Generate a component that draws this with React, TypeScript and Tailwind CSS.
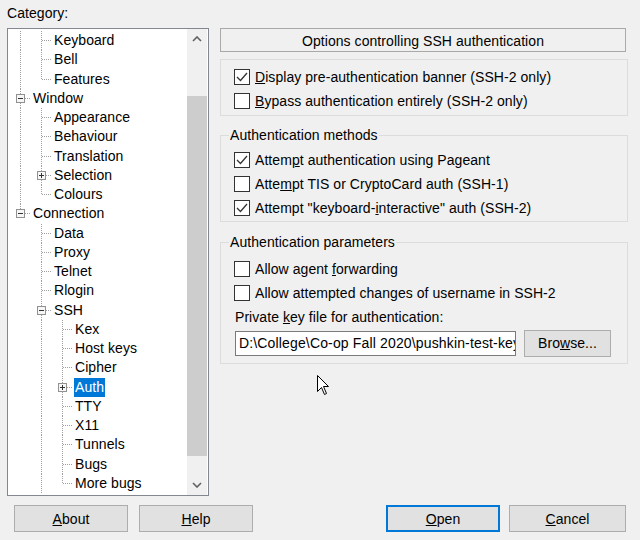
import React from "react";

type Row = {
  label: string;
  level: number;
  guides: boolean[];
  last: boolean;
  expander?: "+" | "-";
  selected?: boolean;
};

const rows: Row[] = [
  { label: "Keyboard", level: 2, guides: [true], last: false },
  { label: "Bell", level: 2, guides: [true], last: false },
  { label: "Features", level: 2, guides: [true], last: true },
  { label: "Window", level: 1, guides: [], last: false, expander: "-" },
  { label: "Appearance", level: 2, guides: [true], last: false },
  { label: "Behaviour", level: 2, guides: [true], last: false },
  { label: "Translation", level: 2, guides: [true], last: false },
  { label: "Selection", level: 2, guides: [true], last: false, expander: "+" },
  { label: "Colours", level: 2, guides: [true], last: true },
  { label: "Connection", level: 1, guides: [], last: true, expander: "-" },
  { label: "Data", level: 2, guides: [false], last: false },
  { label: "Proxy", level: 2, guides: [false], last: false },
  { label: "Telnet", level: 2, guides: [false], last: false },
  { label: "Rlogin", level: 2, guides: [false], last: false },
  { label: "SSH", level: 2, guides: [false], last: false, expander: "-" },
  { label: "Kex", level: 3, guides: [false, true], last: false },
  { label: "Host keys", level: 3, guides: [false, true], last: false },
  { label: "Cipher", level: 3, guides: [false, true], last: false },
  { label: "Auth", level: 3, guides: [false, true], last: false, expander: "+", selected: true },
  { label: "TTY", level: 3, guides: [false, true], last: false },
  { label: "X11", level: 3, guides: [false, true], last: false },
  { label: "Tunnels", level: 3, guides: [false, true], last: false },
  { label: "Bugs", level: 3, guides: [false, true], last: false },
  { label: "More bugs", level: 3, guides: [false, true], last: true },
];

const LINE = "#a0a0a0";
const H = 19.25;

function GuideCell({ on }: { on: boolean }) {
  return (
    <svg width="21" height={H} className="shrink-0" shapeRendering="crispEdges">
      {on && <line x1="10.5" y1="0" x2="10.5" y2={H} stroke={LINE} strokeDasharray="1 1" />}
    </svg>
  );
}

function ConnectorCell({ last, expander }: { last: boolean; expander?: "+" | "-" }) {
  return (
    <svg width="21" height={H} className="shrink-0" shapeRendering="crispEdges">
      <line x1="10.5" y1="0" x2="10.5" y2={last ? 9.5 : H} stroke={LINE} strokeDasharray="1 1" />
      <line x1={expander ? 15 : 11} y1="9.5" x2="21" y2="9.5" stroke={LINE} strokeDasharray="1 1" />
      {expander && (
        <g>
          <rect x="6.5" y="5.5" width="8" height="8" fill="#f6f6f6" stroke="#919191" />
          <line x1="8" y1="9.5" x2="13" y2="9.5" stroke="#333" />
          {expander === "+" && <line x1="10.5" y1="7" x2="10.5" y2="12" stroke="#333" />}
        </g>
      )}
    </svg>
  );
}

function TreeRow({ row }: { row: Row }) {
  return (
    <div className="flex flex-row items-center h-[19.25px] whitespace-nowrap">
      {row.guides.map((g, i) => (
        <GuideCell key={i} on={g} />
      ))}
      <ConnectorCell last={row.last} expander={row.expander} />
      <span
        className={
          row.selected
            ? "ml-[1px] px-[1px] leading-[19px] bg-[#0078d7] text-white"
            : "ml-[1px] px-[1px] leading-[19px]"
        }
      >
        {row.label}
      </span>
    </div>
  );
}

function Chevron({ up }: { up: boolean }) {
  return (
    <svg width="10" height="6" viewBox="0 0 10 6">
      <polyline
        points={up ? "1,5 5,1 9,5" : "1,1 5,5 9,1"}
        fill="none"
        stroke="#606060"
        strokeWidth="1.6"
      />
    </svg>
  );
}

function Check({ checked }: { checked?: boolean }) {
  return (
    <span className="w-[16px] h-[16px] shrink-0 border border-[#333] bg-white flex items-center justify-center">
      {checked && (
        <svg width="14" height="14" viewBox="0 0 14 14">
          <polyline points="2,7 5.5,10.5 12,3" fill="none" stroke="#333" strokeWidth="1.3" />
        </svg>
      )}
    </span>
  );
}

function CheckRow({ checked, children }: { checked?: boolean; children: React.ReactNode }) {
  return (
    <div className="h-[24px] flex flex-row items-center pl-[13px] whitespace-nowrap">
      <Check checked={checked} />
      <span className="ml-[5px]">{children}</span>
    </div>
  );
}

function Btn({ children, className }: { children: React.ReactNode; className: string }) {
  return (
    <button className={"h-[27px] bg-[#e1e1e1] flex items-center justify-center " + className}>
      <span>{children}</span>
    </button>
  );
}

export default function App() {
  return (
    <div className="relative w-[640px] h-[540px] bg-[#f0f0f0] text-black text-[14px] leading-[16px] tracking-[0.06px] font-['Liberation_Sans',Arial,sans-serif] overflow-hidden">
      <div className="flex flex-row">
        {/* left: category tree */}
        <div className="ml-[7px] w-[202px]">
          <div className="pt-[5px] h-[21px]">Category:</div>
          <div className="mt-[7px] h-[468px] border border-[#828790] bg-white flex flex-row overflow-hidden">
            <div className="flex-1 pl-[2px] pt-[2px] overflow-hidden">
              {rows.map((r) => (
                <TreeRow key={r.label} row={r} />
              ))}
            </div>
            <div className="w-[20px] mr-[1px] bg-[#f0f0f0] flex flex-col">
              <div className="h-[20px] flex items-center justify-center">
                <Chevron up />
              </div>
              <div className="flex-1 flex flex-col">
                <div className="mt-[47px] h-[360px] bg-[#cdcdcd]" />
              </div>
              <div className="h-[20px] flex items-center justify-center">
                <Chevron up={false} />
              </div>
            </div>
          </div>
        </div>

        {/* right: options panel */}
        <div className="ml-[11px] w-[408px] flex flex-col">
          <div className="mt-[28px] w-[406px] h-[24px] border border-[#a9a9a9] flex items-center justify-center pt-[1px]">
            <span>Options controlling SSH authentication</span>
          </div>

          <div className="mt-[7px] border border-[#dcdcdc] pt-[5px] pb-[2px]">
            <CheckRow checked>
              <u>D</u>isplay pre-authentication banner (SSH-2 only)
            </CheckRow>
            <CheckRow>
              <u>B</u>ypass authentication entirely (SSH-2 only)
            </CheckRow>
          </div>

          <fieldset className="mt-[11px] border border-[#dcdcdc] pb-[1px]">
            <legend className="ml-[8px] px-[1px] leading-[16px]">Authentication methods</legend>
            <div className="pt-[5px]">
              <CheckRow checked>
                Attem<u>p</u>t authentication using Pageant
              </CheckRow>
              <CheckRow>
                Atte<u>m</u>pt TIS or CryptoCard auth (SSH-1)
              </CheckRow>
              <CheckRow checked>
                Attempt "keyboard-<u>i</u>nteractive" auth (SSH-2)
              </CheckRow>
            </div>
          </fieldset>

          <fieldset className="mt-[12px] border border-[#dcdcdc] pb-[6px]">
            <legend className="ml-[8px] px-[1px] leading-[16px]">Authentication parameters</legend>
            <div className="pt-[7px]">
              <CheckRow>
                Allow agent <u>f</u>orwarding
              </CheckRow>
              <CheckRow>Allow attempted changes of username in SSH-2</CheckRow>
              <div className="h-[24px] flex items-center pl-[14px]">
                <span>
                  Private <u>k</u>ey file for authentication:
                </span>
              </div>
              <div className="h-[28px] flex flex-row items-center pl-[14px]">
                <div className="w-[281px] h-[25px] border border-[#7a7a7a] bg-white flex items-center pl-[3px] overflow-hidden whitespace-nowrap tracking-[0.15px]">
                  D:\College\Co-op Fall 2020\pushkin-test-key.ppk
                </div>
                <Btn className="ml-[8px] w-[87px] border border-[#adadad]">
                  Bro<u>w</u>se...
                </Btn>
              </div>
            </div>
          </fieldset>
        </div>
      </div>

      {/* bottom buttons */}
      <div className="mt-[9px] flex flex-row pl-[14px] pr-[14px]">
        <Btn className="w-[114px] border border-[#adadad]">
          <u>A</u>bout
        </Btn>
        <Btn className="ml-[11px] w-[114px] border border-[#adadad]">
          <u>H</u>elp
        </Btn>
        <Btn className="ml-auto w-[114px] border-2 border-[#0078d7]">
          <u>O</u>pen
        </Btn>
        <Btn className="ml-[9px] w-[117px] border border-[#adadad]">
          <u>C</u>ancel
        </Btn>
      </div>

      {/* mouse pointer */}
      <svg className="absolute left-[317px] top-[375px]" width="13" height="21" viewBox="0 0 13 21">
        <path
          d="M0.5,0.5 L0.5,16.5 L4.5,12.5 L7.5,19.5 L9.5,18.5 L6.5,11.5 L11.5,11.5 Z"
          fill="#fff"
          stroke="#000"
          strokeWidth="1"
        />
      </svg>
    </div>
  );
}
